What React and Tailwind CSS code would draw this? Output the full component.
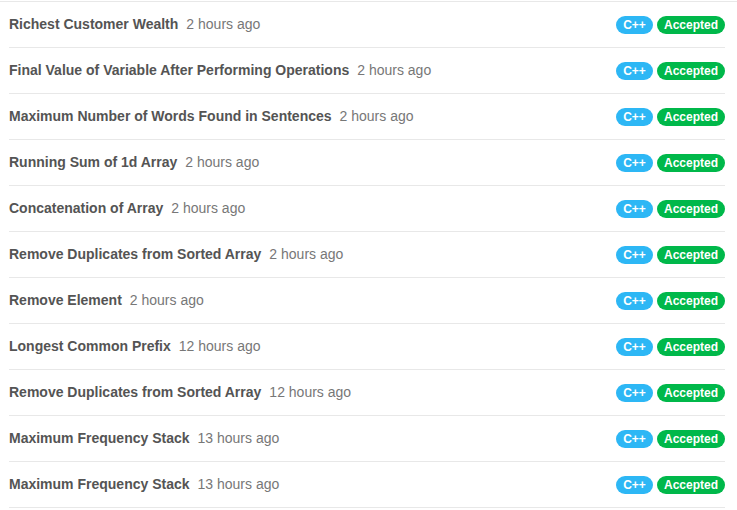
import React from "react";

const rows = [
  { title: "Richest Customer Wealth", time: "2 hours ago" },
  { title: "Final Value of Variable After Performing Operations", time: "2 hours ago" },
  { title: "Maximum Number of Words Found in Sentences", time: "2 hours ago" },
  { title: "Running Sum of 1d Array", time: "2 hours ago" },
  { title: "Concatenation of Array", time: "2 hours ago" },
  { title: "Remove Duplicates from Sorted Array", time: "2 hours ago" },
  { title: "Remove Element", time: "2 hours ago" },
  { title: "Longest Common Prefix", time: "12 hours ago" },
  { title: "Remove Duplicates from Sorted Array", time: "12 hours ago" },
  { title: "Maximum Frequency Stack", time: "13 hours ago" },
  { title: "Maximum Frequency Stack", time: "13 hours ago" },
];

export default function App() {
  return (
    <div
      className="w-[737px] h-[510px] bg-white overflow-hidden"
      style={{ fontFamily: '"Liberation Sans", Arial, sans-serif' }}
    >
      <div className="mt-px border-t border-[#e8e8e8]">
        <ul className="mx-[9px] w-[716px]">
          {rows.map((r, i) => (
            <li
              key={i}
              className="h-[46px] flex items-center justify-between border-b border-[#e8e8e8]"
            >
              <div className="flex items-center gap-2 text-[14px]">
                <span className="font-bold text-[#545454]">{r.title}</span>
                <span className="text-[#777]">{r.time}</span>
              </div>
              <div className="flex items-center gap-1 text-[12px] font-bold text-white">
                <span className="h-[18px] w-[37px] rounded-full bg-[#2db7f5] flex items-center justify-center">
                  C++
                </span>
                <span className="h-[18px] w-[68px] rounded-full bg-[#00b84a] flex items-center justify-center">
                  Accepted
                </span>
              </div>
            </li>
          ))}
        </ul>
      </div>
    </div>
  );
}
